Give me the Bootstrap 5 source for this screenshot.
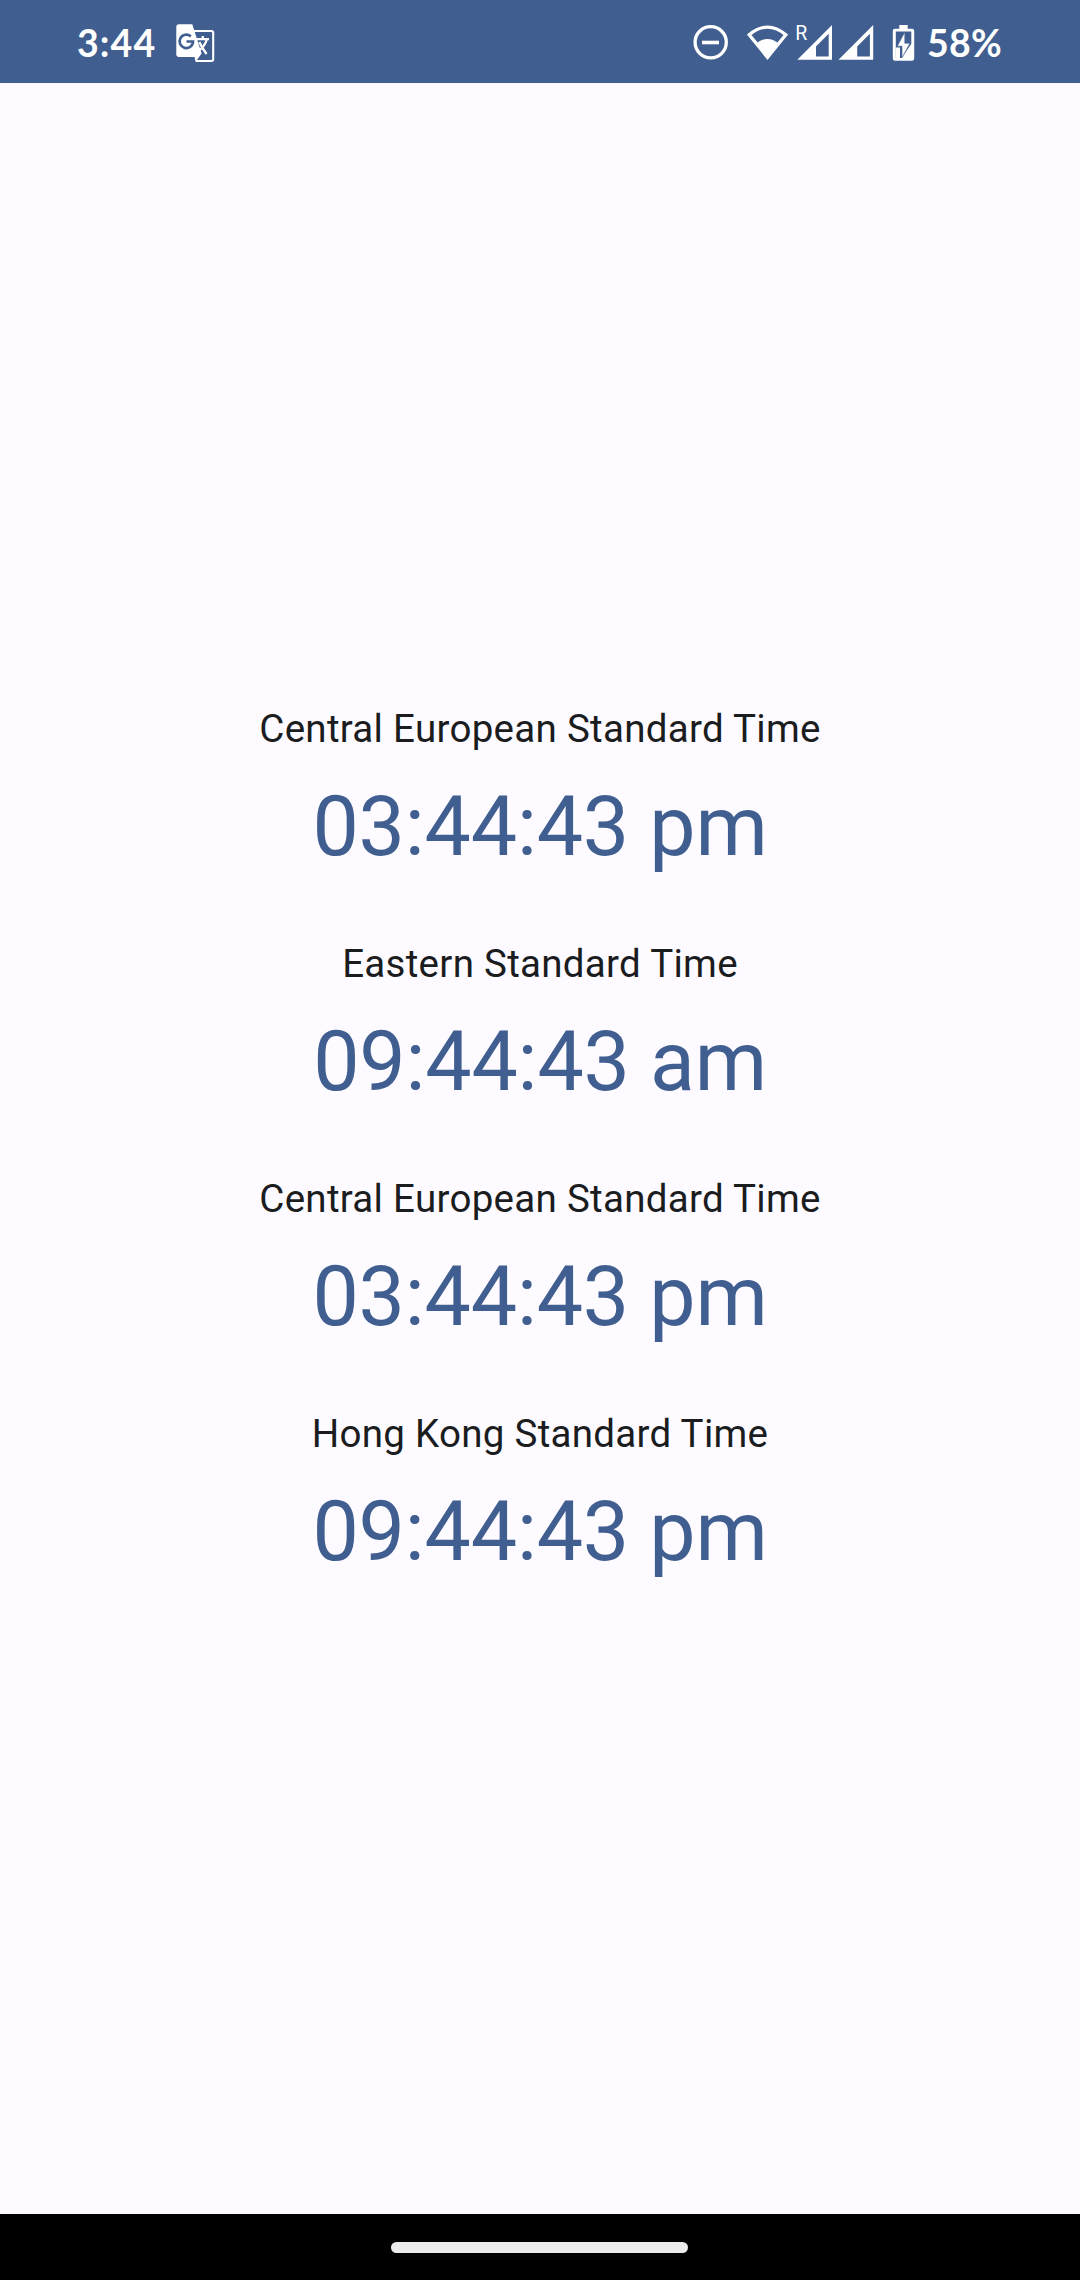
<!DOCTYPE html>
<html lang="en">
<head>
<meta charset="utf-8">
<meta name="viewport" content="width=device-width, initial-scale=1">
<title>World clock</title>
<link href="https://cdn.jsdelivr.net/npm/bootstrap@5.3.0/dist/css/bootstrap.min.css" rel="stylesheet">
<style>
  body { background: #fdfbff; color: #1a1c1e; font-family: Roboto, sans-serif; }
  .status-bar { height: 83px; background: #405f90; color: #fff; font: 700 37.5px/44px Lato, sans-serif; padding: 3px 78px 0 77px; }
  .status-bar svg { display: block; flex: none; }
  .clock-time { width: 99px; letter-spacing: 1.1px; }
  .battery-level { width: 75px; margin-left: 11px; letter-spacing: .3px; white-space: nowrap; }
  .zones { padding-bottom: 10px; }
  .zone { padding: 27px 0; gap: 16px; }
  .zone-name { font-size: 38.5px; line-height: 55px; letter-spacing: .29px; }
  .zone-time { font-size: 82.5px; line-height: 110px; letter-spacing: -.2px; color: #405f90; }
  .nav-area { height: 66px; background: #000; }
  .nav-pill { width: 297px; height: 11px; margin-right: 2px; background: #ebebeb; }
</style>
</head>
<body>
<div class="d-flex flex-column vh-100">
  <header class="status-bar d-flex align-items-center justify-content-between">
    <div class="d-flex align-items-center">
      <span class="clock-time">3:44</span>
      <svg width="39" height="39" viewBox="176 24 39 39">
        <path d="M193 31H211.500Q213.200 31 213.200 32.700V59.300Q213.200 61 211.500 61H196" fill="none" stroke="#fff" stroke-width="2.100"/>
        <path d="M179 24.300H192.300L201.600 53.500L195.500 62L194.500 57H179Q176.300 57 176.300 54.300V27Q176.300 24.300 179 24.300Z" fill="#fff"/>
        <path d="M190.800 36.400A6.700 6.700 0 1 0 193 41.500H186.500" fill="none" stroke="#405f90" stroke-width="2.700"/>
        <path d="M196.500 39.200H209M202.800 36V39.200M206.800 39.500Q205 46 198.500 51M199.300 42Q202 48 206.600 54" fill="none" stroke="#fff" stroke-width="2.300"/>
      </svg>
    </div>
    <div class="d-flex align-items-center">
      <svg width="36" height="38" viewBox="694 24 36 38">
        <circle cx="711.700" cy="42.300" r="15.600" fill="none" stroke="#fff" stroke-width="3.300"/>
        <path d="M703 42.500H720" stroke="#fff" stroke-width="3.600"/>
      </svg>
      <svg class="ms-3" width="45" height="38" viewBox="746 24 45 38">
        <path d="M750.200 34.700Q768.500 19.500 786.800 34.700L768.500 57.300Z" fill="none" stroke="#fff" stroke-width="3.300"/>
        <path d="M757.500 43.300Q768.500 34.500 779.500 43.300L768.500 58Z" fill="#fff"/>
      </svg>
      <svg width="84" height="58" viewBox="791 14 84 58">
        <text x="796.200" y="39.600" font-family="Roboto" font-weight="400" font-size="21" textLength="12" lengthAdjust="spacingAndGlyphs" fill="#fff">R</text>
        <path id="sig" fill="#fff" fill-rule="evenodd" d="M798.300 59.700L833 25V59.700ZM817 46.500V56.500H829.700V33.800Z"/>
        <use href="#sig" x="41.200"/>
      </svg>
      <svg width="42" height="38" viewBox="875 24 42 38">
        <path d="M900.300 25H908.700V28.700H913Q915.200 28.700 915.200 31V58.500Q915.200 60.700 913 60.700H896Q893.800 60.700 893.800 58.500V31Q893.800 28.700 896 28.700H900.300Z" fill="#fff"/>
        <path d="M896.800 31.500H912.300V44L902.500 58H896.800Z" fill="#405f90"/>
        <path d="M905.800 32L898.300 46.200H903V57.700L911 43.200H905.800Z" fill="#fff" stroke="#405f90" stroke-width=".6"/>
        <path d="M896.800 47.500H901V58H896.800Z" fill="#fff"/>
      </svg>
      <span class="battery-level">58%</span>
    </div>
  </header>
  <main class="zones flex-grow-1 d-flex flex-column justify-content-center text-center">
    <section class="zone d-flex flex-column"><div class="zone-name">Central European Standard Time</div><div class="zone-time">03:44:43 pm</div></section>
    <section class="zone d-flex flex-column"><div class="zone-name">Eastern Standard Time</div><div class="zone-time">09:44:43 am</div></section>
    <section class="zone d-flex flex-column"><div class="zone-name">Central European Standard Time</div><div class="zone-time">03:44:43 pm</div></section>
    <section class="zone d-flex flex-column"><div class="zone-name">Hong Kong Standard Time</div><div class="zone-time">09:44:43 pm</div></section>
  </main>
  <footer class="nav-area d-flex align-items-center justify-content-center"><div class="nav-pill rounded-pill"></div></footer>
</div>
<script src="https://cdn.jsdelivr.net/npm/bootstrap@5.3.0/dist/js/bootstrap.bundle.min.js"></script>
</body>
</html>
